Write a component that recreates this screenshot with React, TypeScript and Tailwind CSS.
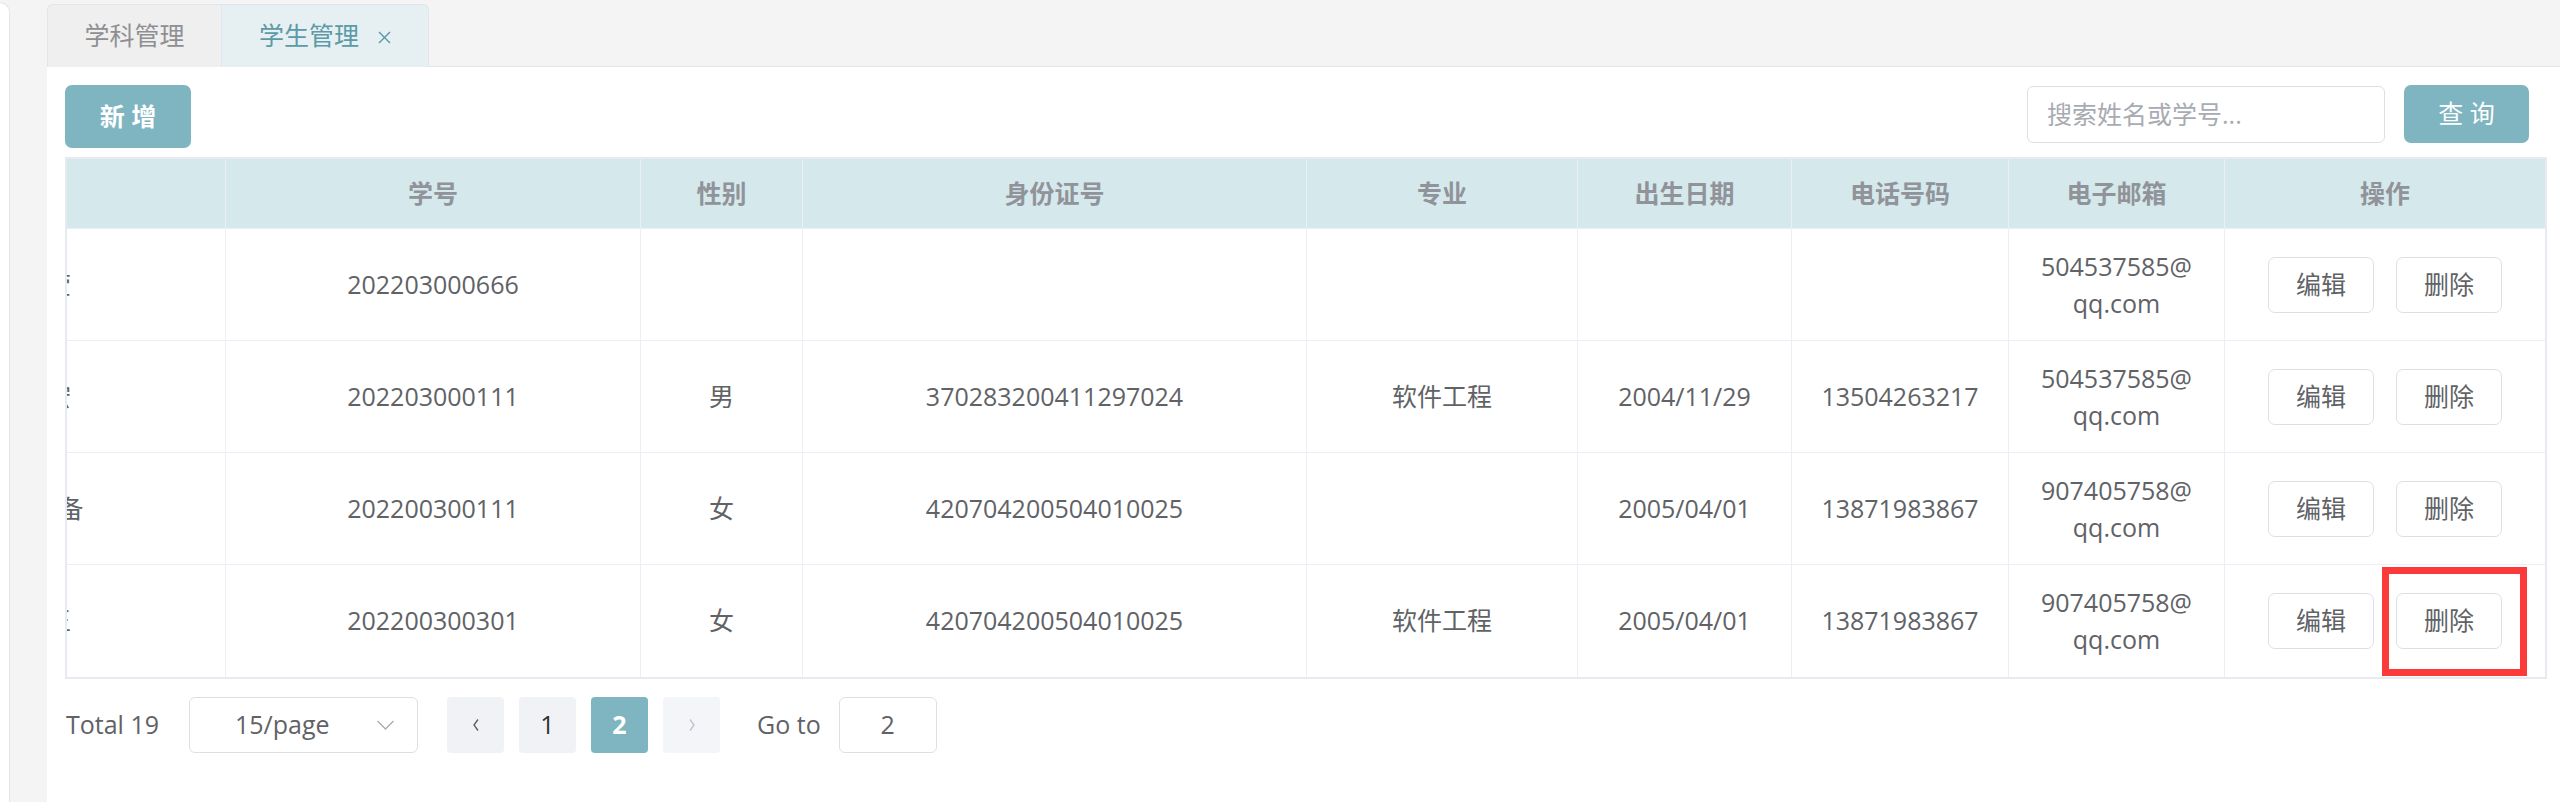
import React from "react";

type Row = {
  name: string;
  id: string;
  sex: string;
  idc: string;
  major: string;
  birth: string;
  phone: string;
  email: [string, string];
};

const rows: Row[] = [
  { name: "李晓莹", id: "202203000666", sex: "", idc: "", major: "", birth: "", phone: "", email: ["504537585@", "qq.com"] },
  { name: "张文宏", id: "202203000111", sex: "男", idc: "370283200411297024", major: "软件工程", birth: "2004/11/29", phone: "13504263217", email: ["504537585@", "qq.com"] },
  { name: "欧阳文备", id: "202200300111", sex: "女", idc: "420704200504010025", major: "", birth: "2005/04/01", phone: "13871983867", email: ["907405758@", "qq.com"] },
  { name: "刘一王", id: "202200300301", sex: "女", idc: "420704200504010025", major: "软件工程", birth: "2005/04/01", phone: "13871983867", email: ["907405758@", "qq.com"] },
];

const headers = ["学号", "性别", "身份证号", "专业", "出生日期", "电话号码", "电子邮箱", "操作"];

const GRID = "grid grid-cols-[158px_415px_162px_504px_271px_214px_217px_216px_321px]";

function Cell({ children, first }: { children?: React.ReactNode; first?: boolean }) {
  return (
    <div
      className={
        "flex items-center justify-center overflow-hidden text-center " +
        (first ? "" : "border-l border-[#ebeef5]")
      }
    >
      {children}
    </div>
  );
}

function NameFrag({ text, bold }: { text: string; bold?: boolean }) {
  return (
    <div className="h-full w-full overflow-hidden">
      <div
        className={
          "-ml-[227px] flex h-full w-[387px] items-center justify-center " +
          (bold ? "font-bold text-[#909399]" : "text-[#606266]")
        }
      >
        {text}
      </div>
    </div>
  );
}

function Btn({ label }: { label: string }) {
  return (
    <div className="flex h-[56px] w-[106px] items-center justify-center rounded-[7px] border border-[#dcdfe6] bg-white text-[#606266]">
      {label}
    </div>
  );
}

function Chevron({ dir, color }: { dir: "left" | "right"; color: string }) {
  return (
    <svg width="10" height="14" viewBox="0 0 10 14" fill="none">
      {dir === "left" ? (
        <polyline points="7,1.5 3,7 7,12.5" stroke={color} strokeWidth="1.4" fill="none" />
      ) : (
        <polyline points="3,1.5 7,7 3,12.5" stroke={color} strokeWidth="1.4" fill="none" />
      )}
    </svg>
  );
}

export default function App() {
  return (
    <div className="relative flex h-[802px] w-[2560px] overflow-hidden bg-[#f4f4f4] font-['Open_Sans','Noto_Sans_CJK_SC',sans-serif] text-[25px] text-[#606266]">
      {/* left sidebar edge */}
      <div className="mt-[2px] w-[10px] shrink-0 rounded-tr-[10px] border-r border-t border-[#e4e4ea] bg-white" />

      {/* main */}
      <div className="ml-[37px] flex flex-1 flex-col pt-[4px]">
        {/* tabs */}
        <div className="flex h-[63px] shrink-0">
          <div className="flex w-[174px] items-center justify-center rounded-tl-[6px] border-l border-t border-[#e4e4ec] bg-[#efefef] text-[#8f8f93]">
            学科管理
          </div>
          <div className="flex w-[208px] items-center rounded-tr-[6px] border-l border-r border-t border-[#e4e4ec] bg-[#e6f0f3] pl-[37px] text-[#5b9aa6]">
            <span>学生管理</span>
            <svg className="ml-[19px] mt-[3px]" width="13" height="13" viewBox="0 0 13 13">
              <line x1="1" y1="1" x2="12" y2="12" stroke="#5b9aa6" strokeWidth="1.4" />
              <line x1="12" y1="1" x2="1" y2="12" stroke="#5b9aa6" strokeWidth="1.4" />
            </svg>
          </div>
          <div className="flex-1 border-b border-[#e4e4ec]" />
        </div>

        {/* content card */}
        <div className="flex-1 bg-white pl-[18px] pr-[13px] pt-[18px]">
          {/* toolbar */}
          <div className="flex items-start justify-between pr-[18px]">
            <div className="flex h-[63px] w-[126px] items-center justify-center rounded-[7px] bg-[#7eb5c0] font-bold text-white">
              新 增
            </div>
            <div className="flex items-start gap-[19px]">
              <div className="mt-[1px] flex h-[57px] w-[358px] items-center rounded-[6px] border border-[#dcdfe6] pl-[19px] text-[#a8abb2]">
                搜索姓名或学号...
              </div>
              <div className="flex h-[58px] w-[125px] items-center justify-center rounded-[7px] bg-[#7eb5c0] text-white">
                查 询
              </div>
            </div>
          </div>

          {/* table */}
          <div className="mt-[9px] border-2 border-[#e7eaf0]">
            <div className={GRID + " h-[70px] border-b border-[#ebeef5] bg-[#d5e8ec]"}>
              <Cell first>
                <NameFrag text="姓名" bold />
              </Cell>
              {headers.map((h) => (
                <Cell key={h}>
                  <span className="font-bold text-[#909399]">{h}</span>
                </Cell>
              ))}
            </div>
            {rows.map((r, i) => (
              <div
                key={i}
                className={GRID + " h-[112px] " + (i < rows.length - 1 ? "border-b border-[#ebeef5]" : "")}
              >
                <Cell first>
                  <NameFrag text={r.name} />
                </Cell>
                <Cell>{r.id}</Cell>
                <Cell>{r.sex}</Cell>
                <Cell>{r.idc}</Cell>
                <Cell>{r.major}</Cell>
                <Cell>{r.birth}</Cell>
                <Cell>{r.phone}</Cell>
                <Cell>
                  <div className="flex flex-col items-center leading-[37px]">
                    <span>{r.email[0]}</span>
                    <span>{r.email[1]}</span>
                  </div>
                </Cell>
                <Cell>
                  <div className="flex gap-[22px]">
                    <Btn label="编辑" />
                    <Btn label="删除" />
                  </div>
                </Cell>
              </div>
            ))}
          </div>

          {/* pagination */}
          <div className="ml-[1px] mt-[18px] flex h-[56px] items-center">
            <span className="text-[#606266]">Total 19</span>
            <div className="ml-[30px] flex h-[56px] w-[229px] items-center rounded-[6px] border border-[#dcdfe6] pl-[45px] pr-[22px]">
              <span className="flex-1">15/page</span>
              <svg width="19" height="12" viewBox="0 0 19 12" fill="none">
                <polyline points="1.5,2 9.5,10 17.5,2" stroke="#a8abb2" strokeWidth="1.3" fill="none" />
              </svg>
            </div>
            <div className="ml-[29px] flex gap-[15px]">
              <div className="flex h-[56px] w-[57px] items-center justify-center rounded-[4px] bg-[#f0f2f5]">
                <Chevron dir="left" color="#606266" />
              </div>
              <div className="flex h-[56px] w-[57px] items-center justify-center rounded-[4px] bg-[#f0f2f5] text-[#303133]">
                1
              </div>
              <div className="flex h-[56px] w-[57px] items-center justify-center rounded-[4px] bg-[#7eb5c0] font-bold text-white">
                2
              </div>
              <div className="flex h-[56px] w-[57px] items-center justify-center rounded-[4px] bg-[#f4f5f8]">
                <Chevron dir="right" color="#c0c4cc" />
              </div>
            </div>
            <span className="ml-[37px]">Go to</span>
            <div className="ml-[18px] flex h-[56px] w-[98px] items-center justify-center rounded-[6px] border border-[#dcdfe6]">
              2
            </div>
          </div>
        </div>
      </div>

      {/* red annotation box */}
      <div className="pointer-events-none absolute left-[2382px] top-[567px] h-[109px] w-[145px] border-[7px] border-[#fc3a3a]" />
    </div>
  );
}
